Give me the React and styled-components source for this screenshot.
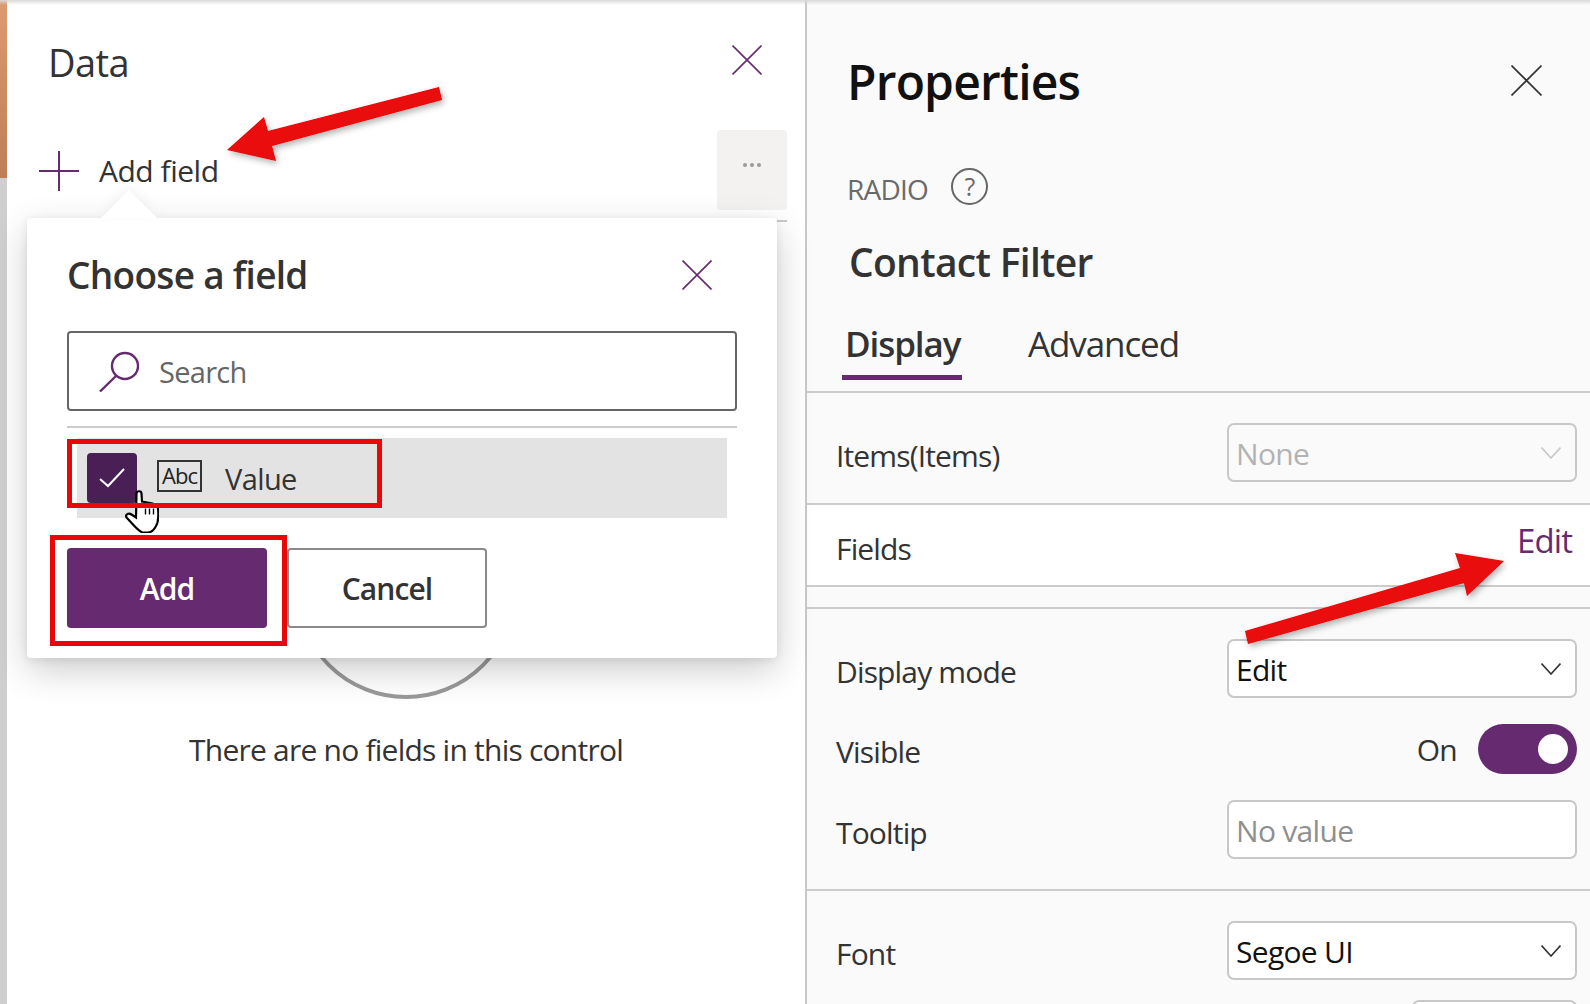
import React from "react";
import styled, { createGlobalStyle } from "styled-components";

const purple = "#652a70";
const ink = "#333333";
const red = "#e90707";

const GlobalStyle = createGlobalStyle`
  html, body {
    margin: 0;
    padding: 0;
    width: 1590px;
    height: 1004px;
    overflow: hidden;
    background: #fff;
    font-family: "Open Sans", "Noto Sans", "Liberation Sans", sans-serif;
    color: ${ink};
  }
  * { box-sizing: border-box; }
`;

const Page = styled.div`
  position: relative;
  display: flex;
  width: 1590px;
  height: 1004px;
  overflow: hidden;
  &::after {
    content: "";
    position: absolute;
    top: 0;
    left: 0;
    right: 0;
    height: 5px;
    background: linear-gradient(#d9d9d9, rgba(255, 255, 255, 0));
  }
`;

const Strip = styled.div`
  width: 7px;
  flex: none;
  background: #cfcfcf;
`;

const StripTop = styled.div`
  width: 7px;
  height: 178px;
  background: linear-gradient(#dc9a70, #bd7f58);
`;

const CloseSlot = styled.span`
  display: flex;
  margin-top: ${(p) => p.$shift}px;
`;

/* left panel */
const DataPanel = styled.section`
  width: 798px;
  flex: none;
  background: #fff;
  display: flex;
  flex-direction: column;
  & > * {
    flex: none;
  }
`;

const DataHead = styled.header`
  display: flex;
  justify-content: space-between;
  align-items: center;
  height: 46px;
  margin-top: 39px;
  padding: 0 43px 0 41px;
`;

const DataTitle = styled.h2`
  margin: 0;
  font-size: 38px;
  font-weight: 400;
  letter-spacing: -0.6px;
`;

const CommandBar = styled.div`
  display: flex;
  justify-content: space-between;
  align-items: flex-start;
  height: 80px;
  margin-top: 45px;
  padding: 0 18px 0 32px;
`;

const AddField = styled.div`
  display: flex;
  align-items: center;
  gap: 20px;
  margin-top: 21px;
  font-size: 30px;
  letter-spacing: -0.48px;
  line-height: 40px;
`;

const MoreButton = styled.div`
  width: 70px;
  height: 80px;
  border-radius: 4px;
  background: #f3f2f1;
  display: flex;
  justify-content: center;
  gap: 3px;
  padding-top: 33px;
`;

const Dot = styled.i`
  width: 4px;
  height: 4px;
  border-radius: 50%;
  background: #9a9a9a;
`;

const BarRule = styled.div`
  height: 2px;
  margin: 10px 18px 0 32px;
  background: #cccccc;
`;

const EmptyState = styled.div`
  display: flex;
  flex-direction: column;
  align-items: center;
  margin-top: 255px;
`;

const EmptyCircle = styled.div`
  width: 222px;
  height: 222px;
  border: 4px solid #999999;
  border-radius: 50%;
`;

const EmptyText = styled.p`
  margin: 31px 0 0;
  font-size: 30px;
  line-height: 40px;
  letter-spacing: -0.77px;
`;

/* popover */
const Callout = styled.div`
  position: absolute;
  left: 27px;
  top: 218px;
  width: 750px;
  height: 440px;
  background: #fff;
  border-radius: 4px;
  box-shadow: 0 12px 36px rgba(0, 0, 0, 0.2), 0 2px 8px rgba(0, 0, 0, 0.08);
  padding: 0 40px;
  &::before {
    content: "";
    position: absolute;
    left: 74px;
    top: -28px;
    border-left: 28px solid transparent;
    border-right: 28px solid transparent;
    border-bottom: 28px solid #fff;
    filter: drop-shadow(0 -4px 6px rgba(0, 0, 0, 0.05));
  }
`;

const CalloutHead = styled.div`
  display: flex;
  justify-content: space-between;
  align-items: center;
  height: 50px;
  margin-top: 31px;
  padding-right: 25px;
`;

const CalloutTitle = styled.h3`
  margin: 0;
  font-size: 37px;
  font-weight: 600;
  letter-spacing: -0.7px;
`;

const SearchBox = styled.div`
  display: flex;
  align-items: center;
  gap: 19px;
  height: 80px;
  margin-top: 32px;
  padding-left: 30px;
  border: 2px solid #666666;
  border-radius: 4px;
  font-size: 29px;
  letter-spacing: -0.7px;
  color: #666666;
`;

const ListRule = styled.div`
  height: 2px;
  margin-top: 15px;
  background: #cccccc;
`;

const ListItem = styled.div`
  display: flex;
  align-items: flex-start;
  width: 650px;
  height: 80px;
  margin: 10px 0 0 10px;
  padding: 15px 0 0 10px;
  background: #e3e3e3;
`;

const CheckBox = styled.div`
  width: 50px;
  height: 50px;
  border-radius: 4px;
  background: #4a1f55;
  display: flex;
  align-items: center;
  justify-content: center;
`;

const AbcTag = styled.div`
  width: 45px;
  height: 32px;
  margin: 7px 0 0 20px;
  border: 2px solid #333333;
  font-size: 22px;
  font-weight: 500;
  line-height: 27px;
  text-align: center;
  letter-spacing: -1px;
  color: #222222;
`;

const ItemName = styled.span`
  margin: 6px 0 0 23px;
  font-size: 29px;
  line-height: 40px;
  letter-spacing: -0.6px;
`;

const ButtonRow = styled.div`
  display: flex;
  gap: 20px;
  margin-top: 30px;
`;

const ActionButton = styled.div`
  width: 200px;
  height: 80px;
  border-radius: 4px;
  display: flex;
  align-items: center;
  justify-content: center;
  font-size: 30px;
  font-weight: 600;
  letter-spacing: -0.9px;
  color: ${(p) => (p.$primary ? "#fff" : ink)};
  background: ${(p) => (p.$primary ? purple : "#fff")};
  border: ${(p) => (p.$primary ? "none" : "2px solid #8a8a8a")};
`;

/* right panel */
const PropsPanel = styled.section`
  flex: 1;
  background: #fafafa;
  border-left: 2px solid #c8c8c8;
  display: flex;
  flex-direction: column;
  min-width: 0;
  & > * {
    flex: none;
  }
`;

const PropsHead = styled.header`
  display: flex;
  justify-content: space-between;
  align-items: center;
  height: 66px;
  margin-top: 48px;
  padding: 0 48px 0 40px;
`;

const PropsTitle = styled.h1`
  margin: 0;
  font-size: 48px;
  font-weight: 600;
  letter-spacing: -0.8px;
  color: #111111;
`;

const TypeRow = styled.div`
  display: flex;
  align-items: center;
  gap: 23px;
  height: 40px;
  margin-top: 55px;
  padding-left: 40px;
  font-size: 28px;
  letter-spacing: -0.8px;
  color: #6a6a6a;
`;

const HelpIcon = styled.span`
  width: 37px;
  height: 37px;
  border: 2px solid #666666;
  border-radius: 50%;
  display: flex;
  align-items: center;
  justify-content: center;
  font-size: 25px;
  margin-top: -6px;
`;

const ControlName = styled.h2`
  margin: 0;
  padding-left: 42px;
  margin-top: 28px;
  height: 50px;
  line-height: 50px;
  font-size: 39px;
  font-weight: 600;
  letter-spacing: -0.7px;
`;

const TabBar = styled.nav`
  display: flex;
  gap: 62px;
  height: 72px;
  margin-top: 34px;
  padding-left: 35px;
  border-bottom: 2px solid #cccccc;
`;

const Tab = styled.div`
  width: ${(p) => (p.$active ? "120px" : "auto")};
  height: 59px;
  padding-left: ${(p) => (p.$active ? 3 : 4)}px;
  font-size: 35px;
  line-height: 46px;
  font-weight: ${(p) => (p.$active ? 600 : 400)};
  letter-spacing: -1.1px;
  border-bottom: ${(p) => (p.$active ? `5px solid ${purple}` : "none")};
`;

const Group = styled.div`
  display: flex;
  flex-direction: column;
  gap: ${(p) => p.$gap || 26}px;
  padding: ${(p) => p.$top}px 13px ${(p) => p.$bottom}px 29px;
  border-bottom: ${(p) => (p.$ruled ? "2px solid #cccccc" : "none")};
`;

const FieldRow = styled.div`
  display: grid;
  grid-template-columns: 1fr 350px;
  align-items: center;
  min-height: ${(p) => p.$height || 59}px;
`;

const FieldLabel = styled.label`
  font-size: 30px;
  line-height: 40px;
  letter-spacing: -0.85px;
  padding-top: 6px;
`;

const Select = styled.div`
  display: flex;
  justify-content: space-between;
  align-items: center;
  height: 59px;
  padding: 2px 14px 0 7px;
  background: ${(p) => (p.$disabled ? "transparent" : "#fff")};
  border: 2px solid #c8c8c8;
  border-radius: 7px;
  font-size: 30px;
  letter-spacing: -0.7px;
  color: ${(p) => (p.$disabled ? "#b3b3b3" : p.$muted ? "#8f8f8f" : "#111")};
`;

const ChevronSvg = styled.svg`
  margin-top: -2px;
`;

const FieldsBand = styled.div`
  display: flex;
  justify-content: space-between;
  height: 84px;
  padding: 21px 18px 0 29px;
  background: #fff;
  border-top: 2px solid #cccccc;
  border-bottom: 2px solid #cccccc;
`;

const EditLink = styled.a`
  margin-top: -3px;
  font-size: 33px;
  line-height: 36px;
  letter-spacing: -0.9px;
  color: ${purple};
`;

const FieldsLabel = styled(FieldLabel)`
  padding-top: 3px;
`;

const BandGap = styled.div`
  height: 20px;
`;

const PropsDivider = styled.div`
  height: 2px;
  background: #cccccc;
`;

const ToggleCell = styled.div`
  display: flex;
  justify-content: flex-end;
  align-items: center;
  gap: 21px;
  font-size: 30px;
  letter-spacing: -0.7px;
`;

const Toggle = styled.div`
  width: 99px;
  height: 50px;
  border-radius: 25px;
  background: ${purple};
  display: flex;
  justify-content: flex-end;
  align-items: center;
  padding-right: 9px;
`;

const Knob = styled.i`
  width: 30px;
  height: 30px;
  border-radius: 50%;
  background: #fff;
`;

const NextControl = styled.div`
  align-self: flex-end;
  width: 165px;
  height: 20px;
  border: 2px solid #c8c8c8;
  border-radius: 7px;
  background: #fff;
`;

/* annotations on top of the screenshot */
const Overlay = styled.svg`
  position: absolute;
  inset: 0;
  pointer-events: none;
`;

const RedBox = styled.div`
  position: absolute;
  left: ${(p) => p.$x}px;
  top: ${(p) => p.$y}px;
  width: ${(p) => p.$w}px;
  height: ${(p) => p.$h}px;
  border: 5px solid ${red};
`;

const HandCursor = styled.svg`
  position: absolute;
  left: 125px;
  top: 490px;
`;

const CloseIcon = ({ size = 30, color = purple }) => (
  <svg width={size} height={size} viewBox="0 0 30 30" fill="none" stroke={color} strokeWidth="1.6">
    <path d="M0.5 0.5 L29.5 29.5 M29.5 0.5 L0.5 29.5" />
  </svg>
);

const Chevron = ({ color = "#333" }) => (
  <ChevronSvg width="20" height="12" viewBox="0 0 20 12" fill="none" stroke={color} strokeWidth="1.6">
    <path d="M0.5 0.5 L10 11 L19.5 0.5" />
  </ChevronSvg>
);

const App = () => (
  <Page>
    <GlobalStyle />
    <Strip>
      <StripTop />
    </Strip>

    <DataPanel>
      <DataHead>
        <DataTitle>Data</DataTitle>
        <CloseSlot $shift={-4}>
          <CloseIcon />
        </CloseSlot>
      </DataHead>
      <CommandBar>
        <AddField>
          <svg width="40" height="40" viewBox="0 0 40 40" stroke={purple} strokeWidth="2">
            <path d="M20 0 V40 M0 20 H40" />
          </svg>
          Add field
        </AddField>
        <MoreButton>
          <Dot />
          <Dot />
          <Dot />
        </MoreButton>
      </CommandBar>
      <BarRule />
      <EmptyState>
        <EmptyCircle />
        <EmptyText>There are no fields in this control</EmptyText>
      </EmptyState>
    </DataPanel>

    <PropsPanel>
      <PropsHead>
        <PropsTitle>Properties</PropsTitle>
        <CloseSlot $shift={-2}>
          <CloseIcon size={31} color="#333" />
        </CloseSlot>
      </PropsHead>
      <TypeRow>
        RADIO
        <HelpIcon>?</HelpIcon>
      </TypeRow>
      <ControlName>Contact Filter</ControlName>
      <TabBar>
        <Tab $active>Display</Tab>
        <Tab>Advanced</Tab>
      </TabBar>

      <Group $top={30} $bottom={21}>
        <FieldRow>
          <FieldLabel>Items(Items)</FieldLabel>
          <Select $disabled>
            None
            <Chevron color="#c8c8c8" />
          </Select>
        </FieldRow>
      </Group>
      <FieldsBand>
        <FieldsLabel>Fields</FieldsLabel>
        <EditLink>Edit</EditLink>
      </FieldsBand>
      <BandGap />

      <PropsDivider />
      <Group $top={30} $bottom={30} $ruled>
        <FieldRow>
          <FieldLabel>Display mode</FieldLabel>
          <Select>
            Edit
            <Chevron />
          </Select>
        </FieldRow>
        <FieldRow $height={50}>
          <FieldLabel>Visible</FieldLabel>
          <ToggleCell>
            On
            <Toggle>
              <Knob />
            </Toggle>
          </ToggleCell>
        </FieldRow>
        <FieldRow>
          <FieldLabel>Tooltip</FieldLabel>
          <Select $muted>No value</Select>
        </FieldRow>
      </Group>
      <Group $top={30} $bottom={0} $gap={20}>
        <FieldRow>
          <FieldLabel>Font</FieldLabel>
          <Select>
            Segoe UI
            <Chevron />
          </Select>
        </FieldRow>
        <NextControl />
      </Group>
    </PropsPanel>

    <Callout>
      <CalloutHead>
        <CalloutTitle>Choose a field</CalloutTitle>
        <CloseSlot $shift={2}>
          <CloseIcon />
        </CloseSlot>
      </CalloutHead>
      <SearchBox>
        <svg width="41" height="41" viewBox="0 0 41 41" fill="none" stroke={purple} strokeWidth="2.4">
          <circle cx="26" cy="15" r="13" />
          <path d="M17 25 L1 40.5" />
        </svg>
        Search
      </SearchBox>
      <ListRule />
      <ListItem>
        <CheckBox>
          <svg width="26" height="20" viewBox="0 0 26 20" fill="none" stroke="#fff" strokeWidth="2">
            <path d="M1 11 L9 18 L25 1" />
          </svg>
        </CheckBox>
        <AbcTag>Abc</AbcTag>
        <ItemName>Value</ItemName>
      </ListItem>
      <ButtonRow>
        <ActionButton $primary>Add</ActionButton>
        <ActionButton>Cancel</ActionButton>
      </ButtonRow>
    </Callout>

    <HandCursor width="34" height="43" viewBox="-0.5 -0.5 34 43" fill="#fff" stroke="#000" strokeWidth="2.2">
      <path d="M11 3 C11 0 16 0 16 3 L16.5 11 L22 12 L27 13 L32 15.5 C33 20 33 27 32 32 C30 38 27 42 22 42 L17 42 C12 40 7 33 1 27 C-0.5 24 3 22 6 24 L10.5 27 Z" />
      <path d="M20 18 V24 M24 18 V24 M28 18 V24" strokeWidth="1.4" />
    </HandCursor>
    <RedBox $x={67} $y={439} $w={315} $h={69} />
    <RedBox $x={50} $y={535} $w={237} $h={111} />

    <Overlay width="1590" height="1004" viewBox="0 0 1590 1004">
      <defs>
        <filter id="arrowShadow" x="-10%" y="-10%" width="120%" height="130%">
          <feDropShadow dx="2" dy="3" stdDeviation="3" floodColor="#000" floodOpacity="0.3" />
        </filter>
      </defs>
      <g fill={red} filter="url(#arrowShadow)">
        <polygon points="439,87 442,100 272,146 276,161 227,150 264,117 268,131" />
        <polygon points="1245,631 1248,644 1464,583 1467,596 1504,561 1455,553 1460,568" />
      </g>
    </Overlay>
  </Page>
);

export default App;
